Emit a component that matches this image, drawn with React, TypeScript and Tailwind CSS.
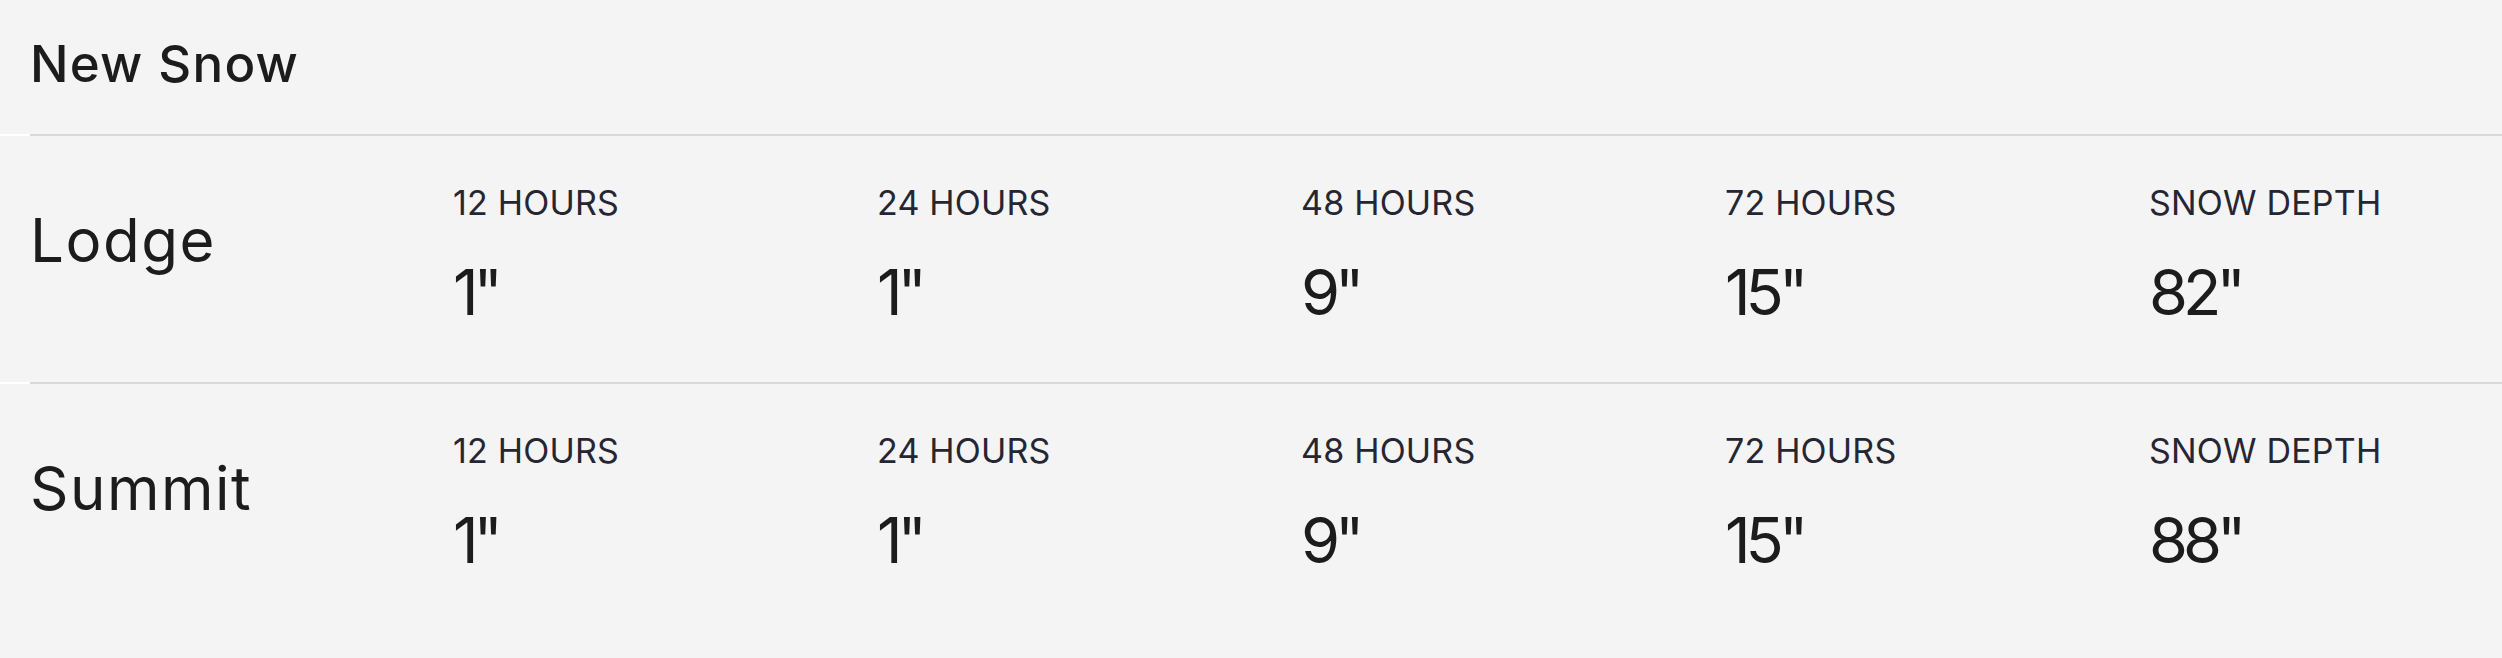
import React from "react";

const cols = ["12 HOURS", "24 HOURS", "48 HOURS", "72 HOURS", "SNOW DEPTH"];
const rows = [
  { name: "Lodge", values: ['1"', '1"', '9"', '15"', '82"'] },
  { name: "Summit", values: ['1"', '1"', '9"', '15"', '88"'] },
];

function Divider() {
  return (
    <div className="flex h-[2px] w-full">
      <div className="w-[30px] bg-white" />
      <div className="flex-1 bg-[#d8d8d8]" />
    </div>
  );
}

export default function App() {
  return (
    <div
      className="w-[2502px] h-[658px] overflow-hidden bg-[#f4f4f4] text-[#1c1c1c]"
      style={{ fontFamily: "Inter, 'Noto Sans', sans-serif" }}
    >
      <div className="h-[134px] pl-[30px] pt-[38px]">
        <h2 className="text-[51px] leading-[51px] font-medium tracking-[1.2px]">New Snow</h2>
      </div>
      {rows.map((r) => (
        <div key={r.name}>
          <Divider />
          <div className="flex h-[246px] items-start pl-[30px]">
            <div className="w-[423px] shrink-0 pt-[74px] text-[60px] leading-[60px] font-normal tracking-[1.5px]">
              {r.name}
            </div>
            {cols.map((c, i) => (
              <div key={c} className="w-[424px] shrink-0 pt-[49px]">
                <div className="text-[34px] leading-[36px] text-[#262633] font-normal tracking-[0.2px]">{c}</div>
                <div className="mt-[40px] text-[63px] leading-[63px] font-normal tracking-[-5px]">{r.values[i]}</div>
              </div>
            ))}
          </div>
        </div>
      ))}
    </div>
  );
}
